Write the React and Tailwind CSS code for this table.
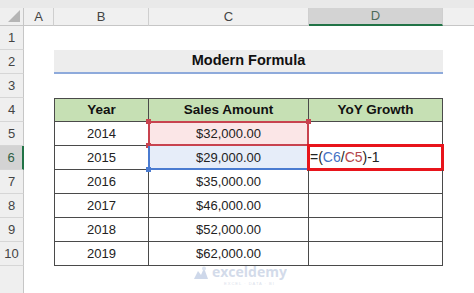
import React from "react";

const font = { fontFamily: '"Liberation Sans", Arial, sans-serif' };

const cols = [
  { key: "A", w: "w-[30px]" },
  { key: "B", w: "w-[95px]" },
  { key: "C", w: "w-[160px]" },
  { key: "D", w: "w-[134px]" },
];

const rows = [
  { year: "2014", amount: "$32,000.00" },
  { year: "2015", amount: "$29,000.00" },
  { year: "2016", amount: "$35,000.00" },
  { year: "2017", amount: "$46,000.00" },
  { year: "2018", amount: "$52,000.00" },
  { year: "2019", amount: "$62,000.00" },
];

function RowHead({ n, active }) {
  return (
    <div
      className={
        "w-[24px] shrink-0 flex items-center justify-center text-[13px] border-b border-[#d6d6d6] " +
        (active
          ? "bg-[#d3d3d3] text-[#2f5f44] border-r-2 border-r-[#217346]"
          : "bg-[#efefef] text-[#444] border-r border-r-[#c6c6c6]")
      }
    >
      {n}
    </div>
  );
}

function Handle({ className }) {
  return <span className={"absolute w-[5px] h-[5px] " + className} />;
}

export default function App() {
  return (
    <div className="relative w-[474px] h-[293px] overflow-hidden bg-white" style={font}>
      {/* column headers */}
      <div className="flex h-[26px] bg-[#e9e9e9] pt-[8px]">
        <div className="w-[24px] shrink-0 bg-[#efefef] border-r border-b border-[#c6c6c6] flex items-end justify-end p-[3px]">
          <svg width="12" height="12" viewBox="0 0 12 12">
            <polygon points="12,0 12,12 0,12" fill="#b5b5b5" />
          </svg>
        </div>
        {cols.map((c) => (
          <div
            key={c.key}
            className={
              c.w +
              " shrink-0 flex items-center justify-center text-[13px] border-r border-[#cfcfcf] " +
              (c.key === "D"
                ? "bg-[#d3d3d3] text-[#4d6b5a] border-b-2 border-b-[#217346]"
                : "bg-[#f0f0f0] text-[#444] border-b border-b-[#c6c6c6]")
            }
          >
            {c.key}
          </div>
        ))}
        <div className="flex-1 bg-[#f0f0f0] border-b border-[#c6c6c6]" />
      </div>

      {/* row 1 */}
      <div className="flex h-[24px]">
        <RowHead n="1" />
      </div>

      {/* row 2: title */}
      <div className="flex h-[24px]">
        <RowHead n="2" />
        <div className="w-[30px] shrink-0" />
        <div className="w-[389px] shrink-0 bg-[#ededed] border-b-2 border-[#8eaadb] flex items-center justify-center text-[14.5px] font-bold text-[#111]">
          Modern Formula
        </div>
      </div>

      {/* row 3 */}
      <div className="flex h-[24px]">
        <RowHead n="3" />
      </div>

      {/* row 4: table header */}
      <div className="flex h-[24px]">
        <RowHead n="4" />
        <div className="w-[30px] shrink-0" />
        {["Year", "Sales Amount", "YoY Growth"].map((t, i) => (
          <div
            key={t}
            className={
              (i === 0 ? "w-[95px] border-l " : i === 1 ? "w-[160px] " : "w-[134px] ") +
              "shrink-0 bg-[#c6e0b4] border-t border-r border-b border-[#4a4a4a] flex items-center justify-center text-[13.5px] font-bold text-[#111]"
            }
          >
            {t}
          </div>
        ))}
      </div>

      {/* data rows */}
      {rows.map((r, i) => {
        const rowNo = i + 5;
        return (
          <div key={r.year} className="flex h-[24px]">
            <RowHead n={rowNo} active={rowNo === 6} />
            <div className="w-[30px] shrink-0" />
            <div className="w-[95px] shrink-0 border-l border-r border-b border-[#4a4a4a] flex items-center justify-center text-[13px] text-[#222]">
              {r.year}
            </div>
            <div
              className={
                "relative w-[160px] shrink-0 border-r border-b border-[#4a4a4a] flex items-center justify-center text-[13px] text-[#222] " +
                (rowNo === 5 ? "bg-[#fbe6e7]" : rowNo === 6 ? "bg-[#e6edf9]" : "")
              }
            >
              {r.amount}
              {rowNo === 5 && (
                <>
                  <span className="absolute -left-[1px] -top-[1px] -right-[1px] -bottom-[1px] border-2 border-[#c8434f]" />
                  <Handle className="bg-[#c8434f] -left-[3px] -top-[3px]" />
                  <Handle className="bg-[#c8434f] -right-[3px] -top-[3px]" />
                  <Handle className="bg-[#c8434f] -left-[3px] -bottom-[3px]" />
                </>
              )}
              {rowNo === 6 && (
                <>
                  <span className="absolute -left-[1px] top-0 -right-[1px] -bottom-[1px] border-2 border-t-0 border-[#4a7bd0]" />
                  <Handle className="bg-[#4a7bd0] -left-[3px] -bottom-[3px]" />
                </>
              )}
            </div>
            <div className="relative w-[134px] shrink-0 border-r border-b border-[#4a4a4a] flex items-center text-[14px] text-[#222]">
              {rowNo === 6 && (
                <>
                  <span className="pl-[1px]">
                    =(<span className="text-[#4472c4]">C6</span>/
                    <span className="text-[#b5474b]">C5</span>)-1
                  </span>
                  <span className="absolute -left-[2px] -top-[2px] -right-[2px] -bottom-[2px] border-[3px] border-[#e8141b]" />
                </>
              )}
            </div>
          </div>
        );
      })}

      {/* rest of row headers */}
      <div className="flex h-[27px]">
        <div className="w-[24px] shrink-0 bg-[#efefef] border-r border-[#c6c6c6]" />
      </div>

      {/* watermark */}
      <div className="absolute left-[193px] top-[265px] flex items-start gap-[3px] opacity-50">
        <svg width="16" height="14" viewBox="0 0 16 14" className="mt-[1px]">
          <path d="M1 13 L5 5 L8 9 L11 2 L15 13 Z" fill="#9fb3d6" />
          <circle cx="11" cy="2.5" r="2" fill="#b9c8e3" />
        </svg>
        <div className="flex flex-col items-center">
          <span className="text-[14px] leading-[14px] font-bold text-[#a9b9d6]" style={{ fontFamily: '"Open Sans", sans-serif' }}>
            exceldemy
          </span>
          <span className="text-[4px] leading-[5px] text-[#b8c3d8] tracking-[1px] mt-[2px]">EXCEL · DATA · BI</span>
        </div>
      </div>
    </div>
  );
}
